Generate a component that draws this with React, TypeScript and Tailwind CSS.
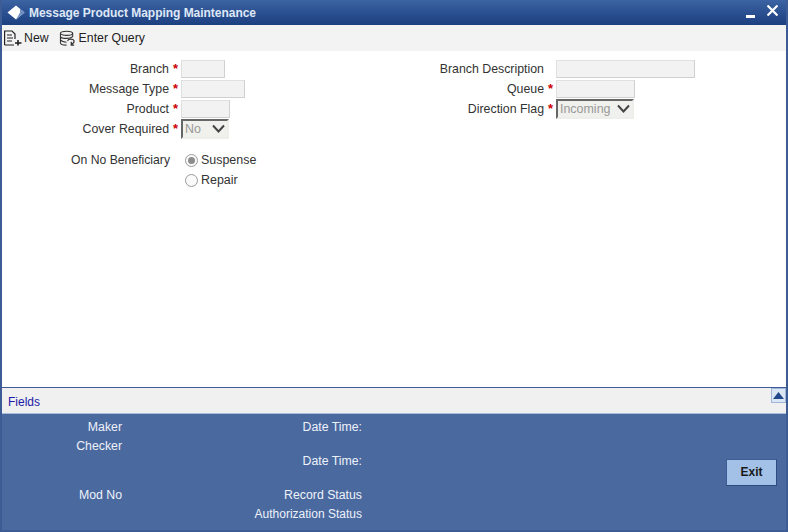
function Star() {
  return <span className="w-[12px] shrink-0 pl-[4px] text-[13px] font-bold leading-[20px] text-[#c00]">*</span>
}

function TextBox({ width }: { width: string }) {
  return <div className={`${width} h-[18px] border border-[#e0e0e0] border-b-[#d0d0d0] border-r-[#d0d0d0] bg-[#f2f2f2]`} />
}

function SelectBox({ value, width }: { value: string; width: string }) {
  return (
    <div className={`${width} flex h-[20px] items-center justify-between border-2 border-[#eeeeea] border-l-[#666] border-t-[#666] bg-[#f0f0ec] pl-[2px] pr-[1px] text-[12.45px] text-[#999]`}>
      <span>{value}</span>
      <svg width="15" height="10" viewBox="0 0 15 10" fill="none" stroke="#444" strokeWidth="2">
        <path d="M2 1.5 L7.5 7.5 L13 1.5" />
      </svg>
    </div>
  )
}

function Row({ label, labelWidth, star, children }: { label: string; labelWidth: string; star?: boolean; children: React.ReactNode }) {
  return (
    <div className="flex h-[20px] items-center">
      <span className={`${labelWidth} text-right text-[12.35px] leading-[20px] text-[#333]`}>{label}</span>
      {star ? <Star /> : <span className="w-[12px] shrink-0" />}
      {children}
    </div>
  )
}

function Radio({ label, checked }: { label: string; checked?: boolean }) {
  return (
    <div className="flex h-[20px] items-center gap-[3px] text-[12.45px] text-[#333]">
      <span className="flex h-[13px] w-[13px] items-center justify-center rounded-full border border-[#9a9a9a] bg-[#fafafa]">
        {checked ? <span className="h-[7px] w-[7px] rounded-full bg-[#8c8c8c]" /> : null}
      </span>
      <span>{label}</span>
    </div>
  )
}

export default function App() {
  return (
    <div className="flex h-[532px] w-[788px] flex-col overflow-hidden border-x-2 border-b-2 border-[#3d5c95] bg-white font-['Liberation_Sans',Arial,sans-serif]">
      <div className="flex h-[25px] shrink-0 items-center justify-between bg-gradient-to-b from-[#3c63a3] to-[#1c3f80] pl-[5px] pr-[8px]">
        <div className="flex items-center gap-[4px]">
          <svg width="18" height="15" viewBox="0 0 18 15">
            <path d="M9 0.5 L17.5 7.5 L9 14.5 L0.5 7.5 Z" fill="#fff" />
            <path d="M13 3.8 L17.5 7.5 L9 14.5 L13 7.5 Z" fill="#6f8fc4" />
          </svg>
          <span className="text-[12px] font-bold tracking-[-0.03px] text-[#dfe8f6]">Message Product Mapping Maintenance</span>
        </div>
        <div className="flex items-start gap-[12px]">
          <span className="mt-[7px] h-[3px] w-[9px] bg-white" />
          <svg width="11" height="11" viewBox="0 0 11 11" fill="none" stroke="#fff" strokeWidth="2.2" className="-mt-[3px]">
            <path d="M0.5 0.5 L10.5 10.5 M10.5 0.5 L0.5 10.5" />
          </svg>
        </div>
      </div>

      <div className="flex h-[26px] shrink-0 items-center bg-[#f3f3f3] pl-[2px] text-[12.3px] text-[#222]">
        <div className="flex items-center gap-[2px]">
          <svg width="18" height="16" viewBox="0 0 18 16" fill="none" stroke="#222" strokeWidth="1.2">
            <path d="M0.6 15 V1 H8 L11 4 V9 M0.6 15 H10 M3 5 H8 M3 8 H9 M3 11 H8" />
            <path d="M14 10 V15.5 M11 13 H17.5" strokeWidth="1.6" />
          </svg>
          <span>New</span>
        </div>
        <div className="ml-[10px] flex items-center gap-[3px]">
          <svg width="17" height="17" viewBox="0 0 18 17" fill="none" stroke="#333" strokeWidth="1.1">
            <ellipse cx="8" cy="3" rx="6.5" ry="2.2" />
            <path d="M1.5 3 V13 C1.5 15 4 15.5 8 15.5 M14.5 3 V7 M1.5 6.5 C3 9 12 9 14.5 6.5 M1.5 10 C3 12 6 12.4 8 12.4" />
            <path d="M9 11 C10 8.5 15 8.5 16 11 C16.5 13 14.5 14 13 15 M13 12 V15.4 H16" strokeWidth="1.3" />
          </svg>
          <span>Enter Query</span>
        </div>
      </div>

      <div className="flex min-h-0 flex-1 flex-col pt-[8px]">
        <div className="flex">
          <div className="flex w-[393px] flex-col">
            <Row label="Branch" labelWidth="w-[167px]" star><TextBox width="w-[44px]" /></Row>
            <Row label="Message Type" labelWidth="w-[167px]" star><TextBox width="w-[64px]" /></Row>
            <Row label="Product" labelWidth="w-[167px]" star><TextBox width="w-[49px]" /></Row>
            <Row label="Cover Required" labelWidth="w-[167px]" star><SelectBox value="No" width="w-[48px]" /></Row>
          </div>
          <div className="flex flex-col">
            <Row label="Branch Description" labelWidth="w-[149px]"><TextBox width="w-[139px]" /></Row>
            <Row label="Queue" labelWidth="w-[149px]" star><TextBox width="w-[79px]" /></Row>
            <Row label="Direction Flag" labelWidth="w-[149px]" star><SelectBox value="Incoming" width="w-[78px]" /></Row>
          </div>
        </div>
        <div className="mt-[11px] flex">
          <span className="w-[168px] text-right text-[12.2px] leading-[20px] text-[#333]">On No Beneficiary</span>
          <div className="ml-[15px] flex flex-col">
            <Radio label="Suspense" checked />
            <Radio label="Repair" />
          </div>
        </div>
      </div>

      <div className="flex h-[26px] shrink-0 items-start justify-between border-t border-[#3d5c95] bg-[#f0f0f0] pl-[6px]">
        <span className="mt-[7px] text-[12px] leading-[14px] text-[#1a1aa6]">Fields</span>
        <div className="flex h-[15px] w-[15px] items-center justify-center border border-[#9fb6d8] bg-[#dbe6f4]">
          <svg width="11" height="7" viewBox="0 0 11 7"><path d="M5.5 0 L11 7 H0 Z" fill="#23488c" /></svg>
        </div>
      </div>

      <div className="flex h-[117px] shrink-0 border-t border-[#a8bcdc] bg-[#4a699f] pt-[5px] text-[12.3px] leading-[17px] text-[#eef2fa]">
        <div className="flex w-[120px] flex-col text-right">
          <span>Maker</span>
          <span className="mt-[2px]">Checker</span>
          <span className="mt-[32px]">Mod No</span>
        </div>
        <div className="flex w-[240px] flex-col text-right">
          <span>Date Time:</span>
          <span className="mt-[17px]">Date Time:</span>
          <span className="mt-[17px]">Record Status</span>
          <span className="mt-[2px] text-[12px]">Authorization Status</span>
        </div>
        <div className="ml-auto mr-[9px] mt-[40px] flex h-[27px] w-[51px] items-center justify-center border border-[#3d5c95] border-b-[#2f4a7d] border-r-[#2f4a7d] bg-[#a3c0e6] text-[12px] font-bold text-[#1a1a1a]">
          Exit
        </div>
      </div>
    </div>
  )
}
